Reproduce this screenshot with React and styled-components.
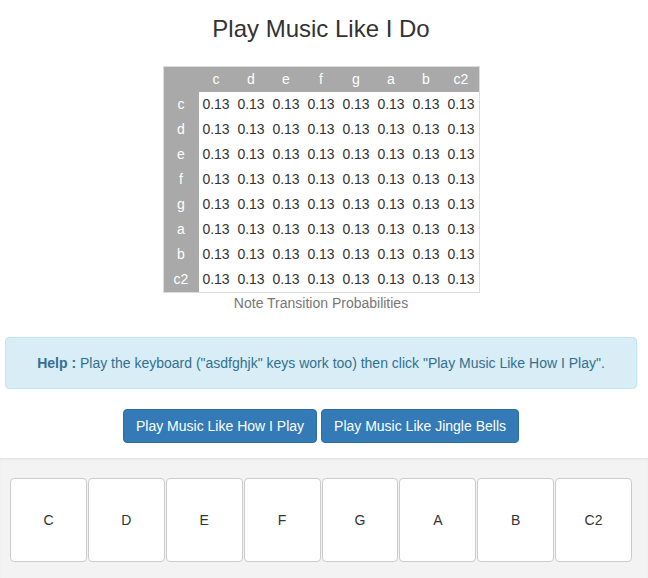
import React from "react";
import styled, { createGlobalStyle } from "styled-components";

const Global = createGlobalStyle`
  html, body { margin: 0; padding: 0; background: #fff; }
  body {
    font-family: "Liberation Sans", Arial, Helvetica, sans-serif;
    font-size: 14px;
    line-height: 1.42857;
    color: #333;
  }
  * { box-sizing: border-box; }
`;

const Page = styled.div`
  display: flex;
  flex-direction: column;
  min-height: 578px;
`;

const Content = styled.div`
  width: 642px;
  display: flex;
  flex-direction: column;
  align-items: center;
`;

const Title = styled.h3`
  margin: 16px 0 0;
  font-size: 24px;
  font-weight: 500;
  line-height: 26px;
  color: #333;
`;

const Table = styled.table`
  margin-top: 24px;
  border-collapse: separate;
  border-spacing: 0;
  border: 1px solid #dcdcdc;
  background: #a9a9a9;
  table-layout: fixed;
`;

const Caption = styled.caption`
  caption-side: bottom;
  color: #777;
  line-height: 20px;
  padding: 0;
  background: #fff;
`;

const HeadCell = styled.th`
  width: 35px;
  height: 25px;
  padding: 0;
  font-weight: 400;
  color: #fff;
  text-align: center;
  background: #a9a9a9;
`;

const Cell = styled.td`
  width: 35px;
  height: 25px;
  padding: 0;
  text-align: center;
  background: #fff;
  color: #333;
`;

const Alert = styled.div`
  margin-top: 24px;
  width: 632px;
  padding: 15px;
  background: #d9edf7;
  border: 1px solid #bce8f1;
  border-radius: 4px;
  color: #31708f;
  text-align: center;
  line-height: 20px;
  b { font-weight: 700; }
`;

const ButtonRow = styled.div`
  margin-top: 20px;
  display: flex;
  gap: 4px;
  justify-content: center;
`;

const Button = styled.button`
  font-family: inherit;
  font-size: 14px;
  line-height: 20px;
  padding: 6px 12px;
  color: #fff;
  background: #337ab7;
  border: 1px solid #2e6da4;
  border-radius: 4px;
  cursor: pointer;
`;

const Panel = styled.div`
  margin-top: 15px;
  flex: 1;
  background: #f3f3f3;
  border-top: 1px solid #e6e6e6;
  box-shadow: inset 0 1px 2px rgba(0, 0, 0, 0.04);
`;

const Keys = styled.div`
  width: 642px;
  display: flex;
  gap: 1px;
  padding: 19px 10px 16px;
`;

const Key = styled.button`
  flex: 1;
  height: 84px;
  font-family: inherit;
  font-size: 14px;
  color: #333;
  background: #fff;
  border: 1px solid #ccc;
  border-radius: 4px;
  padding: 0;
  cursor: pointer;
`;

const notes = ["c", "d", "e", "f", "g", "a", "b", "c2"];

export default function App() {
  return (
    <Page>
      <Global />
      <Content>
        <Title>Play Music Like I Do</Title>
        <Table>
          <Caption>Note Transition Probabilities</Caption>
          <thead>
            <tr>
              <HeadCell />
              {notes.map((n) => (
                <HeadCell key={n}>{n}</HeadCell>
              ))}
            </tr>
          </thead>
          <tbody>
            {notes.map((r) => (
              <tr key={r}>
                <HeadCell>{r}</HeadCell>
                {notes.map((c) => (
                  <Cell key={c}>0.13</Cell>
                ))}
              </tr>
            ))}
          </tbody>
        </Table>
        <Alert>
          <b>Help :</b> Play the keyboard ("asdfghjk" keys work too) then click "Play Music Like How I Play".
        </Alert>
        <ButtonRow>
          <Button>Play Music Like How I Play</Button>
          <Button>Play Music Like Jingle Bells</Button>
        </ButtonRow>
      </Content>
      <Panel>
        <Keys>
          {notes.map((n) => (
            <Key key={n}>{n.toUpperCase()}</Key>
          ))}
        </Keys>
      </Panel>
    </Page>
  );
}
